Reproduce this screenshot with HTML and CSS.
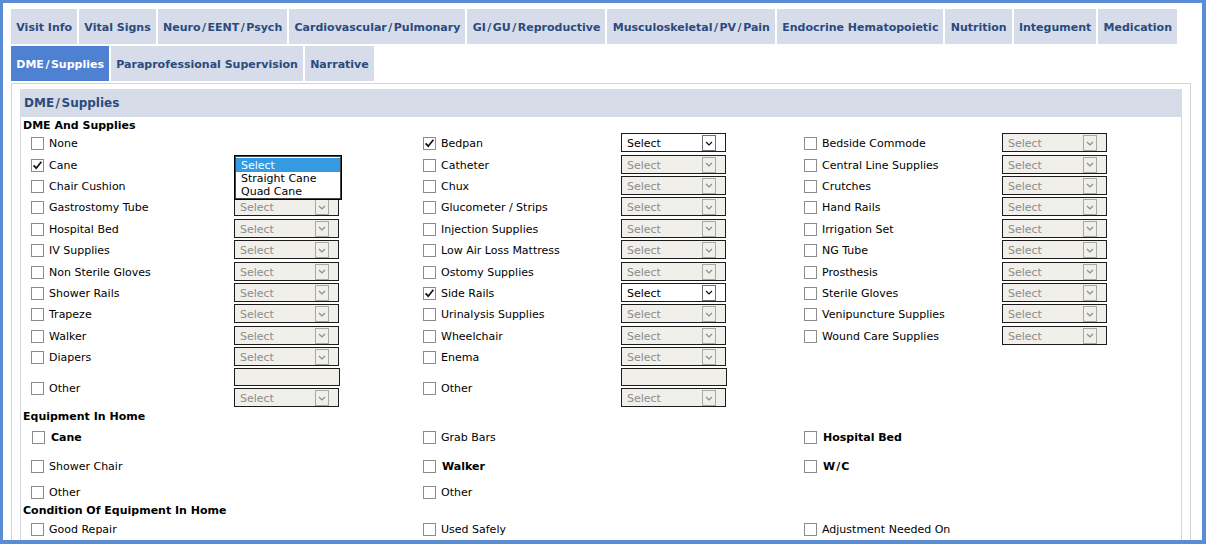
FILE: index.html
```html
<!DOCTYPE html>
<html>
<head>
<meta charset="utf-8">
<link rel="stylesheet" href="styles.css">
</head>
<body>
<div class="frame">
  <nav class="tabs">
    <div class="tab-row">
      <a class="tab">Visit Info</a>
      <a class="tab">Vital Signs</a>
      <a class="tab">Neuro<span class="sl">/</span>EENT<span class="sl">/</span>Psych</a>
      <a class="tab">Cardiovascular<span class="sl">/</span>Pulmonary</a>
      <a class="tab">GI<span class="sl">/</span>GU<span class="sl">/</span>Reproductive</a>
      <a class="tab">Musculoskeletal<span class="sl">/</span>PV<span class="sl">/</span>Pain</a>
      <a class="tab">Endocrine Hematopoietic</a>
      <a class="tab">Nutrition</a>
      <a class="tab">Integument</a>
      <a class="tab">Medication</a>
    </div>
    <div class="tab-row">
      <a class="tab active">DME<span class="sl">/</span>Supplies</a>
      <a class="tab">Paraprofessional Supervision</a>
      <a class="tab">Narrative</a>
    </div>
  </nav>

  <div class="panel">
    <section class="section">
      <div class="section-head">DME<span class="sl">/</span>Supplies</div>
      <div class="section-body">
        <div class="group-title">DME And Supplies</div>
        <div class="grid supplies">
          <!-- row 1 -->
          <div class="check"><span class="box"></span>None</div>
          <div class="pick"></div>
          <div class="check"><span class="box on"><svg viewBox="0 0 13 13"><path d="M2.6 6.4 L5.2 9.2 L10.4 2.8"/></svg></span>Bedpan</div>
          <div class="pick"><div class="select"><span>Select</span><i class="arr"><svg viewBox="0 0 8 5"><path d="M1 1 L4 4 L7 1"/></svg></i></div></div>
          <div class="check"><span class="box"></span>Bedside Commode</div>
          <div class="pick"><div class="select off"><span>Select</span><i class="arr"><svg viewBox="0 0 8 5"><path d="M1 1 L4 4 L7 1"/></svg></i></div></div>
          <!-- row 2 -->
          <div class="check"><span class="box on"><svg viewBox="0 0 13 13"><path d="M2.6 6.4 L5.2 9.2 L10.4 2.8"/></svg></span>Cane</div>
          <div class="pick has-menu">
            <div class="select"><span>Select</span><i class="arr"><svg viewBox="0 0 8 5"><path d="M1 1 L4 4 L7 1"/></svg></i></div>
            <ul class="menu">
              <li class="hl">Select</li>
              <li>Straight Cane</li>
              <li>Quad Cane</li>
            </ul>
          </div>
          <div class="check"><span class="box"></span>Catheter</div>
          <div class="pick"><div class="select off"><span>Select</span><i class="arr"><svg viewBox="0 0 8 5"><path d="M1 1 L4 4 L7 1"/></svg></i></div></div>
          <div class="check"><span class="box"></span>Central Line Supplies</div>
          <div class="pick"><div class="select off"><span>Select</span><i class="arr"><svg viewBox="0 0 8 5"><path d="M1 1 L4 4 L7 1"/></svg></i></div></div>
          <!-- row 3 -->
          <div class="check"><span class="box"></span>Chair Cushion</div>
          <div class="pick"><div class="select off"><span>Select</span><i class="arr"><svg viewBox="0 0 8 5"><path d="M1 1 L4 4 L7 1"/></svg></i></div></div>
          <div class="check"><span class="box"></span>Chux</div>
          <div class="pick"><div class="select off"><span>Select</span><i class="arr"><svg viewBox="0 0 8 5"><path d="M1 1 L4 4 L7 1"/></svg></i></div></div>
          <div class="check"><span class="box"></span>Crutches</div>
          <div class="pick"><div class="select off"><span>Select</span><i class="arr"><svg viewBox="0 0 8 5"><path d="M1 1 L4 4 L7 1"/></svg></i></div></div>
          <!-- row 4 -->
          <div class="check"><span class="box"></span>Gastrostomy Tube</div>
          <div class="pick"><div class="select off"><span>Select</span><i class="arr"><svg viewBox="0 0 8 5"><path d="M1 1 L4 4 L7 1"/></svg></i></div></div>
          <div class="check"><span class="box"></span>Glucometer / Strips</div>
          <div class="pick"><div class="select off"><span>Select</span><i class="arr"><svg viewBox="0 0 8 5"><path d="M1 1 L4 4 L7 1"/></svg></i></div></div>
          <div class="check"><span class="box"></span>Hand Rails</div>
          <div class="pick"><div class="select off"><span>Select</span><i class="arr"><svg viewBox="0 0 8 5"><path d="M1 1 L4 4 L7 1"/></svg></i></div></div>
          <!-- row 5 -->
          <div class="check"><span class="box"></span>Hospital Bed</div>
          <div class="pick"><div class="select off"><span>Select</span><i class="arr"><svg viewBox="0 0 8 5"><path d="M1 1 L4 4 L7 1"/></svg></i></div></div>
          <div class="check"><span class="box"></span>Injection Supplies</div>
          <div class="pick"><div class="select off"><span>Select</span><i class="arr"><svg viewBox="0 0 8 5"><path d="M1 1 L4 4 L7 1"/></svg></i></div></div>
          <div class="check"><span class="box"></span>Irrigation Set</div>
          <div class="pick"><div class="select off"><span>Select</span><i class="arr"><svg viewBox="0 0 8 5"><path d="M1 1 L4 4 L7 1"/></svg></i></div></div>
          <!-- row 6 -->
          <div class="check"><span class="box"></span>IV Supplies</div>
          <div class="pick"><div class="select off"><span>Select</span><i class="arr"><svg viewBox="0 0 8 5"><path d="M1 1 L4 4 L7 1"/></svg></i></div></div>
          <div class="check"><span class="box"></span>Low Air Loss Mattress</div>
          <div class="pick"><div class="select off"><span>Select</span><i class="arr"><svg viewBox="0 0 8 5"><path d="M1 1 L4 4 L7 1"/></svg></i></div></div>
          <div class="check"><span class="box"></span>NG Tube</div>
          <div class="pick"><div class="select off"><span>Select</span><i class="arr"><svg viewBox="0 0 8 5"><path d="M1 1 L4 4 L7 1"/></svg></i></div></div>
          <!-- row 7 -->
          <div class="check"><span class="box"></span>Non Sterile Gloves</div>
          <div class="pick"><div class="select off"><span>Select</span><i class="arr"><svg viewBox="0 0 8 5"><path d="M1 1 L4 4 L7 1"/></svg></i></div></div>
          <div class="check"><span class="box"></span>Ostomy Supplies</div>
          <div class="pick"><div class="select off"><span>Select</span><i class="arr"><svg viewBox="0 0 8 5"><path d="M1 1 L4 4 L7 1"/></svg></i></div></div>
          <div class="check"><span class="box"></span>Prosthesis</div>
          <div class="pick"><div class="select off"><span>Select</span><i class="arr"><svg viewBox="0 0 8 5"><path d="M1 1 L4 4 L7 1"/></svg></i></div></div>
          <!-- row 8 -->
          <div class="check"><span class="box"></span>Shower Rails</div>
          <div class="pick"><div class="select off"><span>Select</span><i class="arr"><svg viewBox="0 0 8 5"><path d="M1 1 L4 4 L7 1"/></svg></i></div></div>
          <div class="check"><span class="box on"><svg viewBox="0 0 13 13"><path d="M2.6 6.4 L5.2 9.2 L10.4 2.8"/></svg></span>Side Rails</div>
          <div class="pick"><div class="select"><span>Select</span><i class="arr"><svg viewBox="0 0 8 5"><path d="M1 1 L4 4 L7 1"/></svg></i></div></div>
          <div class="check"><span class="box"></span>Sterile Gloves</div>
          <div class="pick"><div class="select off"><span>Select</span><i class="arr"><svg viewBox="0 0 8 5"><path d="M1 1 L4 4 L7 1"/></svg></i></div></div>
          <!-- row 9 -->
          <div class="check"><span class="box"></span>Trapeze</div>
          <div class="pick"><div class="select off"><span>Select</span><i class="arr"><svg viewBox="0 0 8 5"><path d="M1 1 L4 4 L7 1"/></svg></i></div></div>
          <div class="check"><span class="box"></span>Urinalysis Supplies</div>
          <div class="pick"><div class="select off"><span>Select</span><i class="arr"><svg viewBox="0 0 8 5"><path d="M1 1 L4 4 L7 1"/></svg></i></div></div>
          <div class="check"><span class="box"></span>Venipuncture Supplies</div>
          <div class="pick"><div class="select off"><span>Select</span><i class="arr"><svg viewBox="0 0 8 5"><path d="M1 1 L4 4 L7 1"/></svg></i></div></div>
          <!-- row 10 -->
          <div class="check"><span class="box"></span>Walker</div>
          <div class="pick"><div class="select off"><span>Select</span><i class="arr"><svg viewBox="0 0 8 5"><path d="M1 1 L4 4 L7 1"/></svg></i></div></div>
          <div class="check"><span class="box"></span>Wheelchair</div>
          <div class="pick"><div class="select off"><span>Select</span><i class="arr"><svg viewBox="0 0 8 5"><path d="M1 1 L4 4 L7 1"/></svg></i></div></div>
          <div class="check"><span class="box"></span>Wound Care Supplies</div>
          <div class="pick"><div class="select off"><span>Select</span><i class="arr"><svg viewBox="0 0 8 5"><path d="M1 1 L4 4 L7 1"/></svg></i></div></div>
          <!-- row 11 -->
          <div class="check"><span class="box"></span>Diapers</div>
          <div class="pick"><div class="select off"><span>Select</span><i class="arr"><svg viewBox="0 0 8 5"><path d="M1 1 L4 4 L7 1"/></svg></i></div></div>
          <div class="check"><span class="box"></span>Enema</div>
          <div class="pick"><div class="select off"><span>Select</span><i class="arr"><svg viewBox="0 0 8 5"><path d="M1 1 L4 4 L7 1"/></svg></i></div></div>
          <div></div>
          <div></div>
          <!-- row 12 -->
          <div class="check"><span class="box"></span>Other</div>
          <div class="pick stack">
            <div class="textbox"></div>
            <div class="select off"><span>Select</span><i class="arr"><svg viewBox="0 0 8 5"><path d="M1 1 L4 4 L7 1"/></svg></i></div>
          </div>
          <div class="check"><span class="box"></span>Other</div>
          <div class="pick stack">
            <div class="textbox"></div>
            <div class="select off"><span>Select</span><i class="arr"><svg viewBox="0 0 8 5"><path d="M1 1 L4 4 L7 1"/></svg></i></div>
          </div>
          <div></div>
          <div></div>
        </div>

        <div class="group-title">Equipment In Home</div>
        <div class="grid equip">
          <div class="check strong"><span class="box"></span>Cane</div>
          <div class="check"><span class="box"></span>Grab Bars</div>
          <div class="check strong"><span class="box"></span>Hospital Bed</div>
          <div class="check"><span class="box"></span>Shower Chair</div>
          <div class="check strong"><span class="box"></span>Walker</div>
          <div class="check strong"><span class="box"></span><span class="wide">W/C</span></div>
          <div class="check"><span class="box"></span>Other</div>
          <div class="check"><span class="box"></span>Other</div>
          <div></div>
        </div>

        <div class="group-title">Condition Of Equipment In Home</div>
        <div class="grid cond">
          <div class="check"><span class="box"></span>Good Repair</div>
          <div class="check"><span class="box"></span>Used Safely</div>
          <div class="check"><span class="box"></span>Adjustment Needed On</div>
        </div>
      </div>
    </section>
  </div>
</div>
</body>
</html>
```

FILE: styles.css
```css
* { box-sizing: border-box; }

html, body {
  margin: 0;
  padding: 0;
  background: #ffffff;
}

body {
  font-family: "DejaVu Sans", Verdana, sans-serif;
  font-size: 11px;
  color: #000;
}

.frame {
  width: 1206px;
  height: 544px;
  overflow: hidden;
  border-style: solid;
  border-color: #5b8dd4;
  border-width: 3px 4px 4px 3px;
  padding: 6px 0 0 8px;
  background: #fff;
}

.sl {
  margin: 0 1.5px;
}

.wide {
  letter-spacing: 1px;
}

/* ---------- tabs ---------- */
.tabs {
  display: flex;
  flex-direction: column;
  gap: 2px;
}

.tab-row {
  display: flex;
  gap: 2px;
}

.tab {
  display: block;
  height: 35px;
  line-height: 33px;
  padding: 2px 5px 0 5.3px;
  background: #d6dce9;
  color: #2b4a7e;
  font-weight: bold;
  font-size: 11px;
  white-space: nowrap;
}

.tab.active {
  background: #4f81d2;
  color: #fff;
}

/* ---------- panel ---------- */
.panel {
  margin-top: 2px;
  width: 1180px;
  height: 600px;
  border: 1px solid #d3d3d3;
  padding: 5px 8px 0 8px;
}

.section {
  height: 100%;
  border-left: 1px solid #d3d8e2;
  border-right: 1px solid #d3d8e2;
}

.section-head {
  height: 28px;
  line-height: 29px;
  background: #d5dce8;
  color: #2c4a7c;
  font-weight: bold;
  font-size: 12px;
  padding-left: 4px;
  margin: 0 -1px;
}

.section-body {
  padding-left: 2px;
}

.group-title {
  height: 15px;
  line-height: 17px;
  font-weight: bold;
}

/* ---------- grids ---------- */
.grid {
  display: grid;
}

.supplies {
  grid-template-columns: 211px 181px 206px 175px 206px 1fr;
  grid-template-rows: repeat(11, 21.4px) 41px;
}

.equip {
  grid-template-columns: 392px 381px 1fr;
  grid-template-rows: 27px 31px 21px;
}

.cond {
  grid-template-columns: 392px 381px 1fr;
  grid-template-rows: 22px;
}

.check {
  display: flex;
  align-items: center;
  gap: 5px;
  padding-left: 8px;
  padding-top: 2px;
  white-space: nowrap;
}

.check.strong {
  font-weight: bold;
  gap: 6px;
}

.equip .check.strong:first-child {
  padding-left: 9px;
}

.box {
  flex: none;
  width: 13px;
  height: 13px;
  border: 1px solid #8c8c8c;
  background: #fff;
  position: relative;
}

.box svg {
  position: absolute;
  left: -1px;
  top: -1px;
  width: 13px;
  height: 13px;
}

.box svg path {
  fill: none;
  stroke: #111;
  stroke-width: 1.7;
}

/* ---------- selects ---------- */
.pick {
  display: flex;
  align-items: center;
}

.pick.stack {
  flex-direction: column;
  align-items: flex-start;
  justify-content: center;
  gap: 2px;
}

.select {
  position: relative;
  width: 105px;
  height: 19px;
  border: 1px solid #1c1c1c;
  background: #fff;
  color: #000;
  line-height: 19px;
  padding-left: 5px;
}

.select.off {
  background: #f0efea;
  color: #8c8c8c;
}

.arr {
  position: absolute;
  right: 9px;
  top: 1px;
  width: 14px;
  height: 16px;
  border: 1px solid #6f6f6f;
  background: #fff;
  display: flex;
  align-items: center;
  justify-content: center;
}

.select.off .arr {
  border-color: #a8a8a8;
  background: #f0efea;
}

.arr svg {
  width: 8px;
  height: 5px;
}

.arr svg path {
  fill: none;
  stroke: #111;
  stroke-width: 1.2;
}

.select.off .arr svg path {
  stroke: #8c8c8c;
}

.textbox {
  width: 106px;
  height: 18px;
  border: 1px solid #1c1c1c;
  background: #f0efea;
}

/* ---------- open dropdown ---------- */
.has-menu {
  position: relative;
}

.menu {
  position: absolute;
  left: 0;
  top: 2px;
  z-index: 5;
  width: 108px;
  height: 45px;
  margin: 0;
  padding: 2px 1px 1px;
  list-style: none;
  background: #fff;
  border: 1px solid #000;
  box-shadow: 0 0 0 1px #444 inset;
}

.menu li {
  height: 13.3px;
  line-height: 13.3px;
  padding-top: 0.5px;
  padding-left: 5px;
  white-space: nowrap;
  overflow: hidden;
}

.menu li.hl {
  background: #349ae2;
  color: #fff;
}
```
